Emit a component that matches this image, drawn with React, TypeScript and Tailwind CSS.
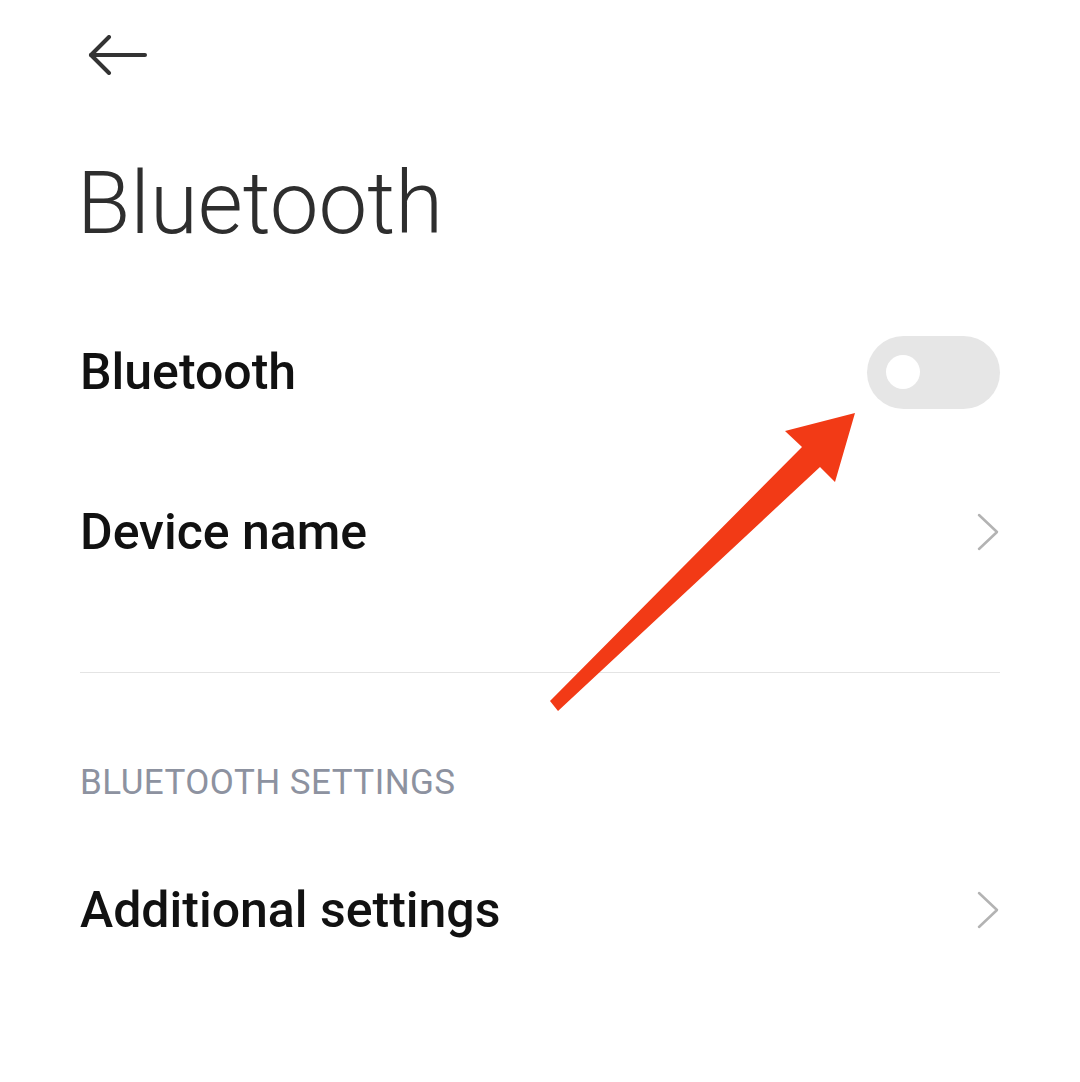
function Chevron() {
  return (
    <svg width="24" height="40" viewBox="0 0 24 40" fill="none" stroke="#b3b3b3" strokeWidth="2.5" strokeLinecap="round" strokeLinejoin="round">
      <polyline points="3,3 21,20 3,37" />
    </svg>
  )
}

export default function App() {
  return (
    <div className="relative w-[1080px] h-[1082px] bg-white overflow-hidden font-['Roboto','Liberation_Sans',sans-serif]">
      <div className="flex flex-col px-[80px]">
        {/* back */}
        <div className="h-[110px] flex items-center pl-[8px]">
          <svg width="60" height="40" viewBox="0 0 60 40" fill="none" stroke="#333333" strokeWidth="4" strokeLinecap="round" strokeLinejoin="round">
            <line x1="3" y1="20" x2="57" y2="20" />
            <polyline points="21,2 3,20 21,38" />
          </svg>
        </div>

        {/* title */}
        <div className="h-[186px] flex items-center">
          <h1 className="text-[87px] leading-none font-light text-[#2e2e2e] -ml-[3px]">Bluetooth</h1>
        </div>

        {/* toggle row */}
        <div className="h-[152px] flex items-center justify-between">
          <span className="text-[50px] leading-none font-medium text-[#111111]">Bluetooth</span>
          <div className="w-[133px] h-[73px] rounded-full bg-[#e6e6e6] flex items-center pl-[19px]">
            <div className="w-[34px] h-[34px] rounded-full bg-white" />
          </div>
        </div>

        {/* device name */}
        <div className="h-[168px] flex items-center justify-between">
          <span className="text-[50px] leading-none font-medium text-[#111111]">Device name</span>
          <Chevron />
        </div>

        <div className="mt-[56px] h-px bg-[#e4e4e4]" />

        <div className="mt-[59px] h-[100px] flex items-center">
          <span className="text-[35px] leading-none text-[#8d92a0] tracking-[0.45px]">BLUETOOTH SETTINGS</span>
        </div>

        <div className="h-[156px] flex items-center justify-between">
          <span className="text-[50px] leading-none font-medium text-[#111111]">Additional settings</span>
          <Chevron />
        </div>
      </div>

      {/* red annotation arrow */}
      <svg className="absolute top-0 left-0 pointer-events-none" width="1080" height="1082" viewBox="0 0 1080 1082">
        <polygon
          points="550,701 802,447 785,431 855,413 835,482 820,467 558,711"
          fill="#f23a16"
        />
      </svg>
    </div>
  )
}
